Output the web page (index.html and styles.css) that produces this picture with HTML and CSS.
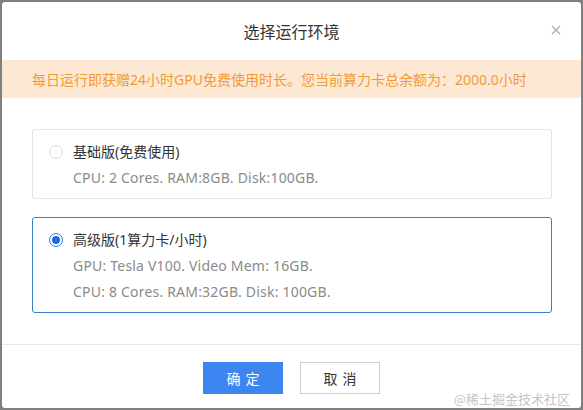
FILE: index.html
```html
<!DOCTYPE html>
<html lang="zh">
<head>
<meta charset="utf-8">
<title>选择运行环境</title>
<link rel="stylesheet" href="styles.css">
</head>
<body>
<div class="dialog">
  <div class="header">
    <div class="title">选择运行环境</div>
    <button class="close" aria-label="关闭">
      <svg width="10" height="10" viewBox="0 0 10 10"><path d="M1 1L9 9M9 1L1 9" stroke="#a8a8a8" stroke-width="1.1" fill="none"/></svg>
    </button>
  </div>
  <div class="notice">每日运行即获赠24小时GPU免费使用时长。您当前算力卡总余额为：2000.0小时</div>
  <div class="body">
    <label class="card">
      <span class="radio"></span>
      <div class="info">
        <div class="name">基础版(免费使用)</div>
        <div class="spec">CPU: 2 Cores. RAM:8GB. Disk:100GB.</div>
      </div>
    </label>
    <label class="card selected">
      <span class="radio checked"></span>
      <div class="info">
        <div class="name">高级版(1算力卡/小时)</div>
        <div class="spec">GPU: Tesla V100. Video Mem: 16GB.</div>
        <div class="spec">CPU: 8 Cores. RAM:32GB. Disk: 100GB.</div>
      </div>
    </label>
  </div>
  <div class="footer">
    <button class="btn primary">确定</button>
    <button class="btn">取消</button>
  </div>
  <div class="watermark">@稀土掘金技术社区</div>
</div>
</body>
</html>
```
FILE: styles.css
```css
* { box-sizing: border-box; }
html, body { margin: 0; padding: 0; }
body {
  background: #7f7f7f;
  width: 583px;
  height: 410px;
  overflow: hidden;
  font-family: "Noto Sans", "Noto Sans CJK SC", sans-serif;
}
.dialog {
  position: relative;
  margin: 2px;
  width: 579px;
  height: 406px;
  background: #fff;
  border-radius: 3px;
  display: flex;
  flex-direction: column;
}
.header {
  position: relative;
  height: 58px;
  display: flex;
  align-items: center;
  justify-content: center;
}
.title {
  font-family: "Noto Sans CJK SC", sans-serif;
  font-size: 16px;
  color: #333;
  margin-top: -1px;
}
.close {
  position: absolute;
  right: 19px;
  top: 22px;
  width: 12px;
  height: 12px;
  padding: 0;
  border: 0;
  background: none;
  display: flex;
  align-items: center;
  justify-content: center;
}
.notice {
  height: 38px;
  background: #fde9d3;
  color: #f29a38;
  font-size: 14px;
  font-family: "Noto Sans", "Noto Sans CJK SC", sans-serif;
  display: flex;
  align-items: center;
  padding-left: 30px;
}
.body {
  padding: 31px 29px 0 30px;
  display: flex;
  flex-direction: column;
  gap: 18px;
}
.card {
  display: flex;
  align-items: flex-start;
  border: 1px solid #e3e3e3;
  border-radius: 3px;
  padding: 9px 16px 7px 16px;
}
.card.selected { border-color: #3d7cc9; }
.radio {
  width: 14px;
  height: 14px;
  border: 1px solid #dcdcdc;
  border-radius: 50%;
  margin-top: 6px;
  margin-right: 10px;
  flex: none;
  display: flex;
  align-items: center;
  justify-content: center;
}
.radio.checked { border-color: #2a74e0; }
.radio.checked::after {
  content: "";
  width: 8px;
  height: 8px;
  border-radius: 50%;
  background: #1f6ce0;
}
.info { display: flex; flex-direction: column; }
.name {
  line-height: 26px;
  font-size: 14px;
  color: #333;
}
.spec {
  line-height: 26px;
  font-size: 14px;
  letter-spacing: 0.2px;
  color: #8a8a8a;
}
.footer {
  margin-top: 31px;
  border-top: 1px solid #e8e8e8;
  padding-top: 17px;
  display: flex;
  justify-content: center;
  gap: 17px;
}
.btn {
  width: 80px;
  height: 32px;
  border: 1px solid #cfcfcf;
  background: #fff;
  color: #333;
  font-family: "Noto Sans CJK SC", sans-serif;
  font-size: 14px;
  letter-spacing: 5px;
  padding: 0 0 0 5px;
}
.btn.primary {
  background: #3d86f2;
  border-color: #3d86f2;
  color: #fff;
}
.watermark {
  position: absolute;
  right: 11px;
  bottom: 0;
  line-height: 18px;
  font-family: "Noto Sans CJK SC", sans-serif;
  font-size: 13px;
  color: #c4c4c4;
}
```
